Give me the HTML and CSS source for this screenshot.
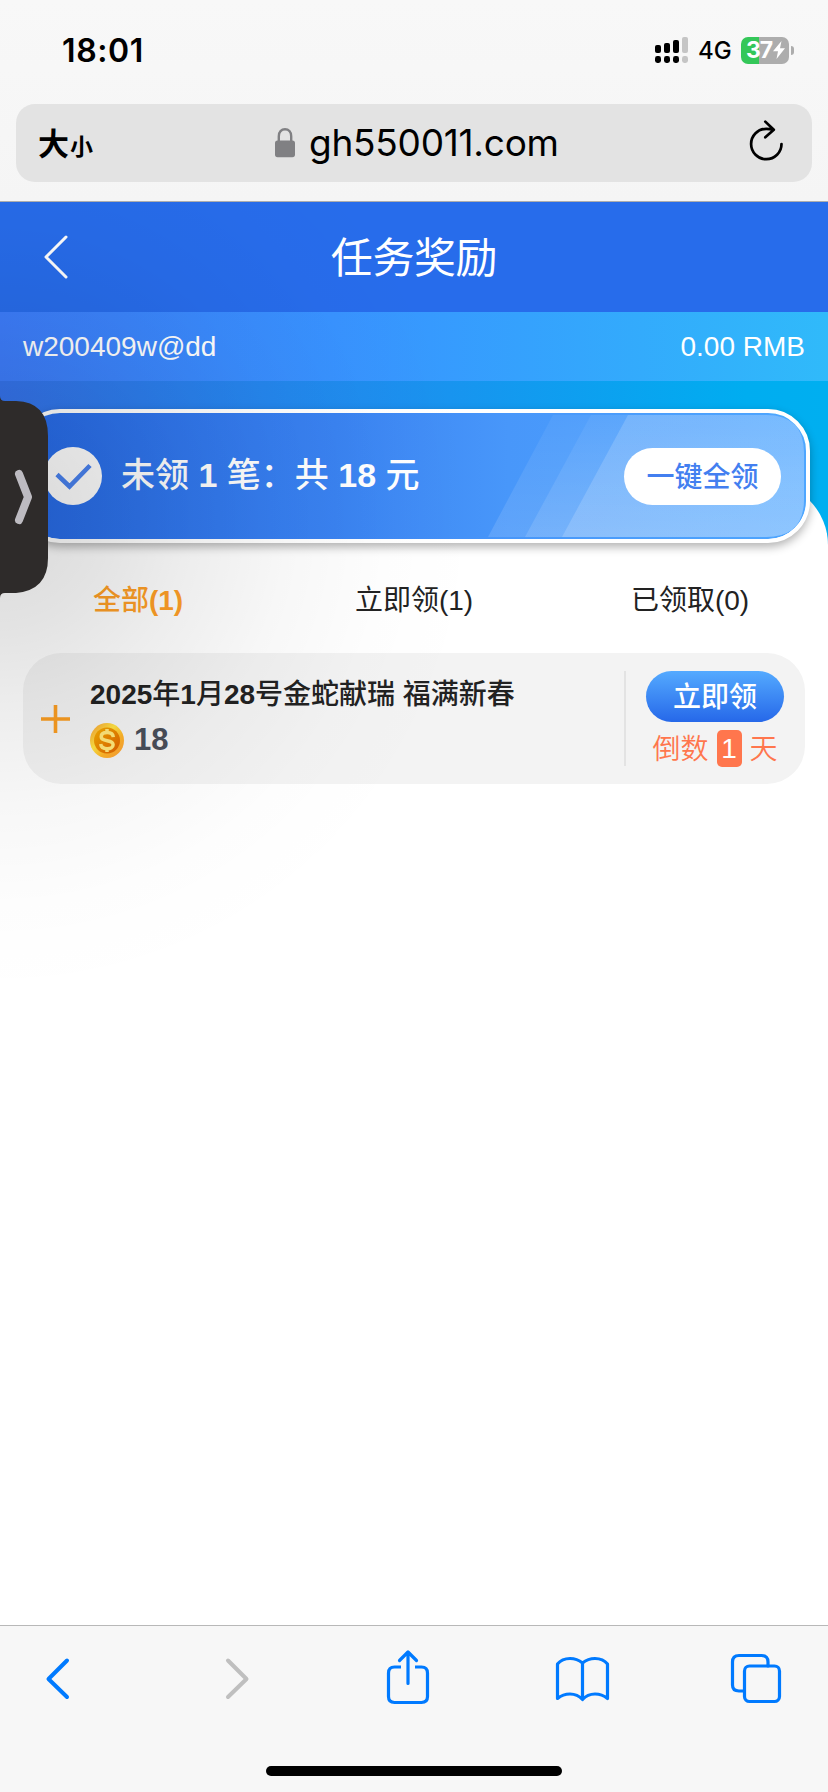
FILE: index.html
```html
<!DOCTYPE html>
<html lang="zh-CN">
<head>
<meta charset="utf-8">
<title>任务奖励</title>
<link rel="stylesheet" href="styles.css">
</head>
<body>
<div class="screen">
  <header class="browser-top">
    <div class="status">
      <span class="clock">18:01</span>
      <div class="status-right">
        <svg class="signal" viewBox="655 36 34 28"><g fill="#000"><rect x="655" y="45" width="6" height="8" rx="2"/><rect x="664" y="43" width="6" height="10" rx="2"/><rect x="673" y="40" width="6" height="13" rx="2"/><rect x="655" y="56" width="6" height="7" rx="2.4"/><rect x="664" y="56" width="6" height="7" rx="2.4"/><rect x="673" y="56" width="6" height="7" rx="2.4"/></g><g fill="#c5c5c5"><rect x="682" y="37" width="6" height="16" rx="2"/><rect x="682" y="56" width="6" height="7" rx="2.4"/></g></svg>
        <span class="net">4G</span>
        <div class="battery"><span class="level">37</span><svg class="bolt" viewBox="0 0 12 18"><path d="M8.5 0 0 10.3h5L3.5 18 12 7.2H7z" fill="#fff"/></svg></div>
        <span class="nub"></span>
      </div>
    </div>
    <div class="address">
      <span class="size"><b class="big">大</b><b class="small">小</b></span>
      <div class="url">
        <svg class="lock" viewBox="0 0 20 30"><path d="M3.8 14V8.2C3.8 4 6.4 1.3 10 1.3s6.2 2.7 6.2 6.9V14" fill="none" stroke="#808083" stroke-width="2.4"/><rect y="12.5" width="20" height="16.7" rx="2.6" fill="#808083"/></svg>
        <span>gh550011.com</span>
      </div>
      <svg class="reload" viewBox="748 121 38 44"><path d="M781.5 144A15.200 15.200 0 1 1 766.300 128.800Q770 128.800 773.500 129.700M765.3 121.6 773.800 129.800 765.3 137.300" fill="none" stroke="#000" stroke-width="2.7" stroke-linecap="round" stroke-linejoin="round"/></svg>
    </div>
  </header>

  <main class="page">
    <div class="title-bar">
      <svg class="back" viewBox="0 0 24 44"><path d="M22 2 2 22 22 42" fill="none" stroke="#fff" stroke-width="3" stroke-linecap="round" stroke-linejoin="round"/></svg>
      <h1>任务奖励</h1>
    </div>
    <div class="account"><span>w200409w@dd</span><span>0.00 RMB</span></div>
    <div class="hero">
      <section class="summary">
        <svg class="stripes" viewBox="22 413 784 126" preserveAspectRatio="none"><defs><linearGradient id="s" x1="0" x2="0" y1="0" y2="1"><stop offset="0" stop-color="#fff" stop-opacity=".05"/><stop offset="1" stop-color="#fff" stop-opacity=".13"/></linearGradient><linearGradient id="t" x1="0" x2="0" y1="0" y2="1"><stop offset="0" stop-color="#fff" stop-opacity=".16"/><stop offset="1" stop-color="#fff" stop-opacity=".16"/></linearGradient></defs><path d="M553 415H766Q804 415 804 453V499Q804 537 766 537H488z" fill="url(#s)"/><path d="M591 415H766Q804 415 804 453V499Q804 537 766 537H525z" fill="url(#s)"/><path d="M628 415H766Q804 415 804 453V499Q804 537 766 537H562z" fill="url(#t)"/></svg>
        <svg class="check" viewBox="0 0 58 58"><circle cx="29" cy="29" r="29" fill="#fff"/><path d="M13 27.5 25.5 39.5 46 18.5" fill="none" stroke="#4a83f1" stroke-width="4.6"/></svg>
        <p class="total">未领 <b>1</b> 笔：共 <b>18</b> 元</p>
        <button class="claim-all">一键全领</button>
      </section>
    </div>
    <nav class="tabs"><span class="active">全部<b>(1)</b></span><span>立即领(1)</span><span>已领取(0)</span></nav>
    <article class="reward">
      <svg class="plus" viewBox="0 0 30 28"><path d="M0 14H29M14.5 0V28" stroke="#fa9d22" stroke-width="3.6"/></svg>
      <div class="info">
        <h2><b>2025</b>年<b>1</b>月<b>28</b>号金蛇献瑞 福满新春</h2>
        <div class="amount">
          <svg class="coin" viewBox="0 0 34 35"><defs><linearGradient id="rim" x1="0" y1="0" x2="1" y2="1"><stop offset="0" stop-color="#f59a35"/><stop offset=".4" stop-color="#ffe342"/><stop offset=".65" stop-color="#ffb429"/><stop offset="1" stop-color="#fb9a36"/></linearGradient><linearGradient id="face" x1="0" y1="0" x2="1" y2="1"><stop offset="0" stop-color="#f5ae00"/><stop offset="1" stop-color="#dc5d00"/></linearGradient></defs><ellipse cx="17" cy="17.5" rx="17" ry="17.5" fill="url(#rim)"/><circle cx="17" cy="17.5" r="13" fill="url(#face)"/><path d="M23.3 14.2C23 10.8 20.5 9.6 17.2 9.6 13.8 9.6 11.2 11 11.2 13.8 11.2 16.4 13.8 17.2 17.2 17.7 20.8 18.3 23.1 19.2 23.1 21.7 23.1 24.4 20.3 25.7 17.2 25.7 13.8 25.7 11.1 24.3 10.7 21M17 6V10M17 25.5V29" fill="none" stroke="#ffe67a" stroke-width="3.5"/></svg>
          <b>18</b>
        </div>
      </div>
      <div class="action">
        <button class="claim">立即领</button>
        <p class="countdown"><span>倒数</span><em>1</em><span>天</span></p>
      </div>
    </article>
    <div class="shade"></div>
    <svg class="handle" viewBox="0 396 50 202"><path d="M0 396Q0 401 5 401H16Q48 402 48 436V558Q48 590 16 593H5Q0 593 0 598z" fill="#2e2b2a"/><path d="M19 474 28 497 19 520" fill="none" stroke="#bdbbc1" stroke-width="8" stroke-linecap="round" stroke-linejoin="round"/></svg>
  </main>

  <footer class="toolbar">
    <div class="tools">
      <svg viewBox="28 1640 60 80"><path d="M67 1660.500 48.500 1679 67 1697" /></svg>
      <svg class="off" viewBox="202 1640 60 80"><path d="M228 1660.500 246.500 1679 228 1697"/></svg>
      <svg class="thin" viewBox="376 1640 60 80"><path d="M408 1683.500V1652M399.500 1660.500 408 1652 416.500 1660.500"/><path d="M401 1667H394.500Q388.500 1667 388.500 1673V1696.500Q388.500 1702.500 394.500 1702.500H421.500Q427.500 1702.500 427.500 1696.500V1673Q427.500 1667 421.500 1667H415" stroke-linecap="butt"/></svg>
      <svg class="thin" viewBox="550 1640 60 80"><path d="M582.500 1663Q577 1658.500 570 1658.500 562 1658.500 557.500 1664V1698.500Q563 1694 570 1694 577.500 1694 582.500 1699.500 587.500 1694 595 1694 602 1694 607.500 1698.500V1664Q603 1658.500 595 1658.500 588 1658.500 582.500 1663zV1699"/></svg>
      <svg class="thin" viewBox="724 1640 60 80"><rect x="744.500" y="1666" width="35" height="35.500" rx="5"/><path d="M744 1691H739Q732.500 1691 732.500 1685V1662Q732.500 1655.500 739 1655.500H761.500Q768 1655.500 768 1662V1666"/></svg>
    </div>
    <div class="home"></div>
  </footer>
</div>
</body>
</html>
```
FILE: styles.css
```css
* { box-sizing: border-box; }
body, h1, h2, p { margin: 0; }
body { background: #fff; }
svg { display: block; flex: none; overflow: visible; }
button { border: 0; padding: 0; font: inherit; }
b { font-weight: 700; }
.screen {
  width: 828px; height: 1792px; display: flex; flex-direction: column; overflow: hidden;
  font-family: "Liberation Sans", "Noto Sans CJK SC", sans-serif; font-size: 28px; color: #222;
}
.browser-top { height: 202px; flex: none; background: linear-gradient(#f8f8f8, #f5f5f5); border-bottom: 1px solid #adadad; font-family: Inter, "Noto Sans CJK SC", sans-serif; color: #000; }
.status { height: 104px; padding: 0 34px 0 62px; display: flex; justify-content: space-between; }
.clock { font-size: 32px; line-height: 40px; font-weight: 600; margin-top: 31px; letter-spacing: .6px; }
.status-right { display: flex; align-items: center; height: 28px; margin-top: 36px; }
.signal { width: 34px; height: 28px; }
.net { width: 34px; margin-left: 9px; font-size: 24px; font-weight: 500; line-height: 28px; padding-top: 1px; }
.battery { width: 48px; height: 27px; margin-left: 9px; border-radius: 7px; display: flex; align-items: center; padding-left: 5px; background: linear-gradient(90deg, #34c759 18px, #adadad 18px); }
.level { width: 28px; font-size: 23px; line-height: 27px; font-weight: 700; color: #fff; letter-spacing: -1px; }
.bolt { width: 12px; height: 18px; margin-left: -1px; }
.nub { width: 3px; height: 9px; margin-left: 2px; border-radius: 0 4px 4px 0; background: #adadad; }
.address { height: 78px; margin: 0 16px; padding: 0 26px 0 22px; border-radius: 19px; background: #e3e3e3; display: grid; grid-template-columns: 237px 1fr 38px; align-items: center; }
.size { display: flex; align-items: baseline; line-height: 40px; padding-top: 4px; }
.big { font-size: 31px; }
.small { font-size: 23px; margin-left: 1px; }
.url { display: flex; align-items: center; gap: 14px; font-size: 37px; line-height: 44px; letter-spacing: -.25px; white-space: nowrap; }
.lock { width: 20px; height: 30px; }
.reload { width: 38px; height: 44px; }
.page { flex: 1; min-height: 0; position: relative; background: #fff; }
.title-bar { height: 110px; background: #276ceb; display: grid; grid-template-columns: 120px 1fr 120px; align-items: center; }
.back { width: 24px; height: 44px; margin-left: 44px; }
h1 { font-size: 42px; font-weight: 400; line-height: 60px; color: #fff; text-align: center; letter-spacing: -.4px; padding-top: 3px; }
.account { height: 69px; padding: 0 23px; display: flex; align-items: center; justify-content: space-between; color: #fff; background: linear-gradient(90deg, #3d7dfc, #3892ff 40%, #30bafa); }
.hero { height: 164px; padding: 28px 18px 0; background: linear-gradient(90deg, #3573ec, #1b91ef 50%, #00adf0 90%, #00aff0); position: relative; }
.hero::after { content: ""; position: absolute; left: 0; right: 0; bottom: 0; height: 63px; border-radius: 63px 63px 0 0; background: #fff; }
.summary { position: relative; z-index: 1; height: 134px; border: 4px solid #fff; border-radius: 42px; background: #4ea6ff linear-gradient(90deg, #276bea, #3a83f2 40%, #4897fa 62%, #4ea6ff) padding-box; box-shadow: 0 4px 10px rgba(0,0,0,.3); display: flex; align-items: center; padding: 0 25px 0 22px; }
.stripes { position: absolute; inset: 0; width: 784px; height: 126px; }
.check { width: 58px; height: 58px; position: relative; }
.total { position: relative; margin-left: 19px; flex: 1; color: #fff; font-size: 34px; font-weight: 500; line-height: 50px; white-space: nowrap; padding-bottom: 2px; }
.claim-all { position: relative; width: 157px; height: 57px; border-radius: 29px; background: #fff; color: #437ff0; font-weight: 500; padding-bottom: 3px; }
.tabs { height: 108px; padding-bottom: 2px; display: grid; grid-template-columns: repeat(3, 1fr); align-items: center; text-align: center; }
.tabs .active { color: #ff9f27; font-weight: 500; }
.reward { height: 131px; margin: 0 23px; border-radius: 38px; background: #f3f3f3; display: flex; align-items: center; padding: 0 21px 0 18px; }
.plus { width: 30px; height: 28px; }
.info { flex: 1; margin-left: 19px; padding-bottom: 3px; }
h2 { font-size: 28px; font-weight: 500; line-height: 42px; white-space: nowrap; }
.amount { height: 40px; display: flex; align-items: center; gap: 10px; color: #494e59; font-size: 31px; line-height: 36px; margin-top: 5px; }
.amount b { padding-bottom: 2px; }
.coin { width: 34px; height: 35px; }
.action { width: 160px; height: 95px; border-left: 2px solid #e3e3e3; padding-left: 20px; }
.claim { width: 138px; height: 51px; border-radius: 26px; background: linear-gradient(#54aaff, #2668e9); color: #fff; font-weight: 500; display: block; padding-bottom: 4px; }
.countdown { display: flex; align-items: center; justify-content: center; gap: 8px; height: 37px; margin-top: 8px; color: #ff764d; font-weight: 350; }
.countdown span { padding-bottom: 3px; }
.countdown em { width: 25px; height: 37px; line-height: 37px; border-radius: 5px; background: #ff764d; color: #fff; text-align: center; font-style: normal; }
.shade { position: absolute; z-index: 2; left: 0; top: 0; width: 500px; height: 800px; pointer-events: none; background: radial-gradient(circle at 0 315px, rgba(0,0,0,.135) 50px, rgba(0,0,0,.11) 110px, rgba(0,0,0,.07) 190px, rgba(0,0,0,.03) 290px, rgba(0,0,0,.009) 390px, transparent 485px); }
.handle { position: absolute; z-index: 3; left: 0; top: 194px; width: 50px; height: 202px; }
.toolbar { height: 167px; flex: none; background: #f7f7f7; border-top: 1px solid #b8b8b8; }
.tools { display: flex; gap: 114px; padding: 14px 0 0 28px; }
.tools svg { width: 60px; height: 80px; fill: none; stroke: #007aff; stroke-width: 4; stroke-linecap: round; stroke-linejoin: round; }
.tools .off { stroke: #bfbfbf; }
.tools .thin { stroke-width: 3.200px; }
.home { width: 296px; height: 10px; margin: 46px auto 0; border-radius: 5px; background: #000; }
```
